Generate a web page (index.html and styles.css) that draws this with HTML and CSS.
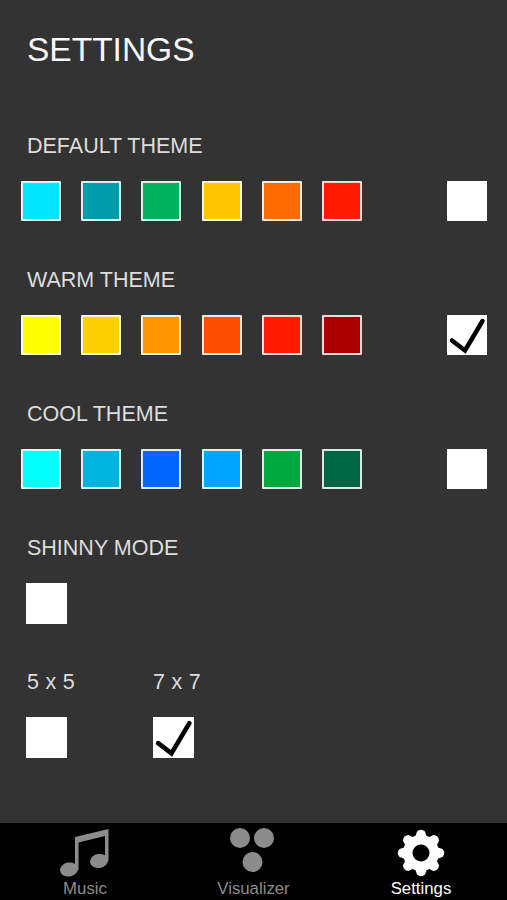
FILE: index.html
```html
<!DOCTYPE html>
<html lang="en">
<head>
<meta charset="utf-8">
<title>Settings</title>
<link rel="stylesheet" href="styles.css">
</head>
<body>
<div class="app">
  <main class="content">
    <h1 class="title">SETTINGS</h1>

    <section class="group first">
      <h2 class="label">DEFAULT THEME</h2>
      <div class="row">
        <div class="swatches">
          <span class="swatch c1"></span><span class="swatch c2"></span><span class="swatch c3"></span>
          <span class="swatch c4"></span><span class="swatch c5"></span><span class="swatch c6"></span>
        </div>
        <span class="box"></span>
      </div>
    </section>

    <section class="group">
      <h2 class="label">WARM THEME</h2>
      <div class="row">
        <div class="swatches">
          <span class="swatch w1"></span><span class="swatch w2"></span><span class="swatch w3"></span>
          <span class="swatch w4"></span><span class="swatch w5"></span><span class="swatch w6"></span>
        </div>
        <span class="box">
          <svg class="check" viewBox="0 0 40 40"><path d="M5 25.500 L18 35.500 L35.500 6"/></svg>
        </span>
      </div>
    </section>

    <section class="group">
      <h2 class="label">COOL THEME</h2>
      <div class="row">
        <div class="swatches">
          <span class="swatch k1"></span><span class="swatch k2"></span><span class="swatch k3"></span>
          <span class="swatch k4"></span><span class="swatch k5"></span><span class="swatch k6"></span>
        </div>
        <span class="box"></span>
      </div>
    </section>

    <section class="group inset">
      <h2 class="label">SHINNY MODE</h2>
      <div class="row">
        <span class="box"></span>
      </div>
    </section>

    <section class="group inset grids">
      <div class="grid-option">
        <h2 class="label size">5 x 5</h2>
        <div class="row"><span class="box"></span></div>
      </div>
      <div class="grid-option">
        <h2 class="label size">7 x 7</h2>
        <div class="row"><span class="box">
          <svg class="check" viewBox="0 0 40 40"><path d="M5 25.500 L18 35.500 L35.500 6"/></svg>
        </span></div>
      </div>
    </section>
  </main>

  <nav class="tabs">
    <div class="tab">
      <svg class="icon" viewBox="0 0 50 50">
        <g fill="#8c8c8c">
          <path d="M15 9 L48.500 1 L48.500 33 L45 33 L45 8 L18.500 14.500 L18.500 42 L15 42 Z"/>
          <ellipse cx="9" cy="41.500" rx="9" ry="7" transform="rotate(-10 9 41.500)"/>
          <ellipse cx="39" cy="33" rx="9" ry="7" transform="rotate(-10 39 33)"/>
        </g>
      </svg>
      <span class="tab-label">Music</span>
    </div>
    <div class="tab">
      <svg class="icon" viewBox="0 0 50 50"><g fill="#8c8c8c"><circle cx="11" cy="10" r="10"/><circle cx="35" cy="10" r="10"/><circle cx="23.500" cy="34" r="10"/></g></svg>
      <span class="tab-label">Visualizer</span>
    </div>
    <div class="tab active">
      <svg class="icon" viewBox="0 0 50 50">
        <defs>
          <path id="tooth" d="M18.500 11 L21 3.500 Q25 0 29 3.500 L31.500 11 Z"/>
        </defs>
        <g fill="#ffffff">
          <path fill-rule="evenodd" d="M25 7 A18 18 0 1 0 25 43 A18 18 0 1 0 25 7 Z M25 16.500 A8.500 8.500 0 1 1 25 33.500 A8.500 8.500 0 1 1 25 16.500 Z"/>
          <use href="#tooth"/>
          <use href="#tooth" transform="rotate(45 25 25)"/>
          <use href="#tooth" transform="rotate(90 25 25)"/>
          <use href="#tooth" transform="rotate(135 25 25)"/>
          <use href="#tooth" transform="rotate(180 25 25)"/>
          <use href="#tooth" transform="rotate(225 25 25)"/>
          <use href="#tooth" transform="rotate(270 25 25)"/>
          <use href="#tooth" transform="rotate(315 25 25)"/>
        </g>
      </svg>
      <span class="tab-label">Settings</span>
    </div>
  </nav>
</div>
</body>
</html>
```
FILE: styles.css
```css
* { box-sizing: border-box; }
html, body { margin: 0; padding: 0; }
body { background: #333333; font-family: "Liberation Sans", Arial, sans-serif; }

.app { width: 507px; height: 900px; display: flex; flex-direction: column; overflow: hidden; }

.content { flex: 1; padding: 30px 20px 0 21px; }

.title {
  margin: 0 0 0 6px;
  font-size: 33.500px;
  line-height: 40px;
  font-weight: 400;
  color: #f8f8f8;
}

.group { height: 134px; }
.group.first { margin-top: 63px; }
.group.inset { padding-left: 5px; }

.label {
  margin: 0 0 0 6px;
  padding-top: 1px;
  height: 24px;
  font-size: 21.500px;
  line-height: 24px;
  font-weight: 400;
  color: #dddddd;
}
.inset .label { margin-left: 1px; }
.label.size { letter-spacing: 0.300px; }
.grid-option + .grid-option .label { margin-left: 0; }

.row {
  margin-top: 24px;
  display: flex;
  justify-content: space-between;
  align-items: center;
}

.swatches { display: flex; gap: 20.200px; }

.swatch {
  display: block;
  width: 40px;
  height: 40px;
  border: 2px solid rgba(255, 255, 255, 0.85);
  border-radius: 1px;
}

.box { display: block; width: 40px; height: 40px; background: #ffffff; }
.inset .box { width: 41px; height: 41px; }
.check { display: block; width: 100%; height: 100%; }
.check path { fill: none; stroke: #000000; stroke-width: 4.500px; stroke-linecap: round; stroke-linejoin: miter; }

.c1 { background: #00e5ff; }
.c2 { background: #009ea8; }
.c3 { background: #00b160; }
.c4 { background: #ffc600; }
.c5 { background: #ff6a00; }
.c6 { background: #ff1a00; }

.w1 { background: #ffff00; }
.w2 { background: #ffd000; }
.w3 { background: #ff9500; }
.w4 { background: #ff4d00; }
.w5 { background: #ff1a00; }
.w6 { background: #aa0000; }

.k1 { background: #00ffff; }
.k2 { background: #00b4e0; }
.k3 { background: #0066ff; }
.k4 { background: #00a5ff; }
.k5 { background: #00a840; }
.k6 { background: #006644; }

.grids { display: flex; gap: 86px; }
.grid-option { width: 41px; }
.grid-option .label { white-space: nowrap; }

.tabs {
  height: 77px;
  background: #000000;
  display: grid;
  grid-template-columns: 170px 167px 168px;
}

.tab {
  display: flex;
  flex-direction: column;
  align-items: center;
  padding-top: 5px;
}

.icon { display: block; width: 50px; height: 50px; flex: none; }

.tab-label {
  font-size: 16.800px;
  line-height: 18px;
  margin-top: 2px;
  white-space: nowrap;
  color: #8c8c8c;
}
.tab.active .tab-label { color: #ffffff; }
```
